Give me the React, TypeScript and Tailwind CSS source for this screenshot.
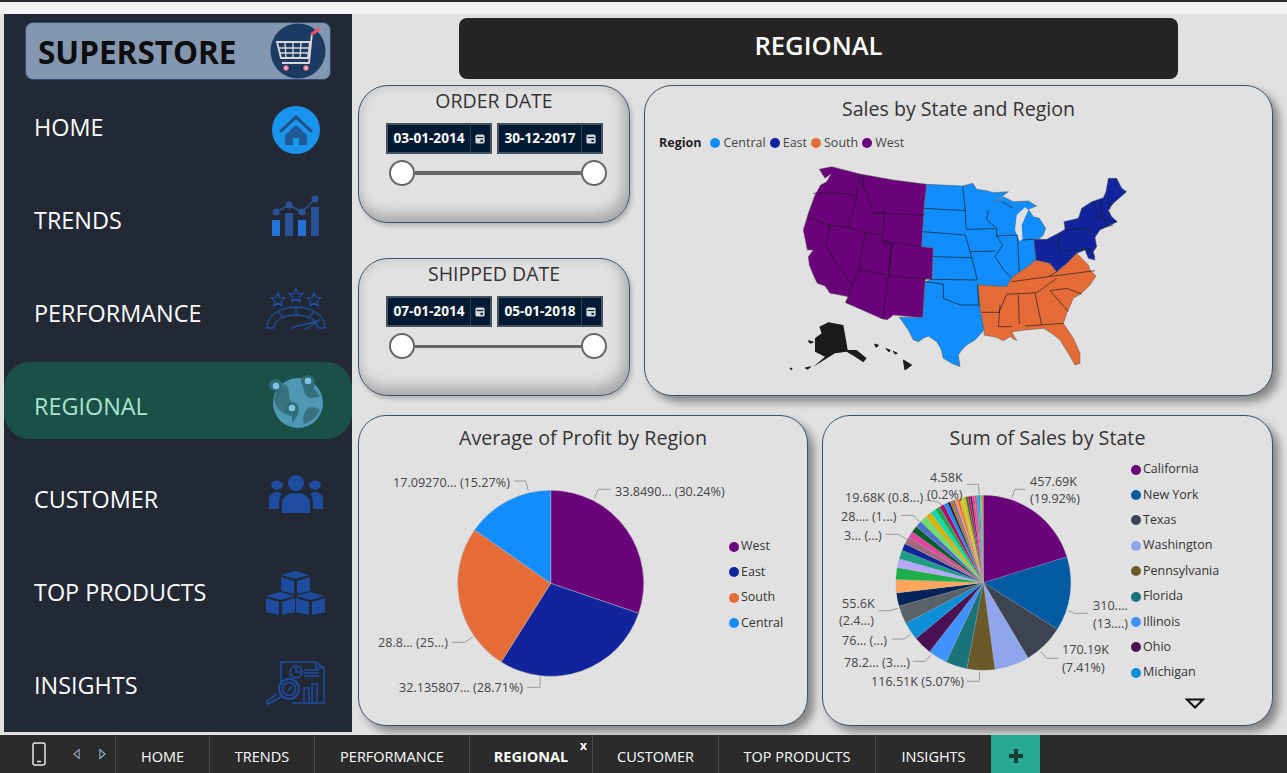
import type { ReactNode } from "react";

const polar = (cx: number, cy: number, r: number, pct: number) => {
  const a = (pct / 100) * Math.PI * 2;
  return [cx + r * Math.sin(a), cy - r * Math.cos(a)];
};

function PieSlices({ cx, cy, r, data, strokeWidth }: { cx: number; cy: number; r: number; data: [number, string][]; strokeWidth: number }) {
  const total = data.reduce((s, d) => s + d[0], 0);
  let run = 0;
  return (
    <>
      {data.map(([v, color], i) => {
        const from = (run / total) * 100;
        run += v;
        const to = (run / total) * 100;
        const [x1, y1] = polar(cx, cy, r, from);
        const [x2, y2] = polar(cx, cy, r, to);
        return (
          <path
            key={i}
            d={`M${cx} ${cy}L${x1} ${y1}A${r} ${r} 0 ${to - from > 50 ? 1 : 0} 1 ${x2} ${y2}Z`}
            fill={color}
            stroke="#b5b5b5"
            strokeWidth={strokeWidth}
          />
        );
      })}
    </>
  );
}

const profitData: [number, string][] = [
  [30.24, "#6b007b"],
  [28.71, "#12239e"],
  [25.78, "#e66c37"],
  [15.27, "#118dff"],
];

const salesData: [number, string][] = [
  [19.92, "#6b007b"], [13.5, "#005ba3"], [7.41, "#3b4450"], [6.3, "#8fa6ee"], [5.07, "#6b5a29"],
  [3.9, "#1a7379"], [3.5, "#4092ff"], [3.4, "#4a1153"], [3.3, "#0a8fd8"], [3.3, "#5a6168"],
  [2.4, "#00245a"], [2.4, "#ffa65c"], [2.2, "#1db04a"], [1.6, "#b8a6ff"], [1.6, "#1e9e85"],
  [1.3, "#10259a"], [1.3, "#a5697f"], [1.2, "#e0459f"], [1.2, "#0b5a2a"], [1.2, "#4a6fc8"],
  [1.2, "#6edc6e"], [1.2, "#dcb20c"], [1.0, "#0cdcb0"], [0.9, "#20a84a"], [0.86, "#b3006e"],
  [0.7, "#118dff"], [0.5, "#2a1a5e"], [0.5, "#a67c00"], [0.4, "#7a5fd0"], [0.4, "#ff9a3c"],
  [0.4, "#e66c37"], [0.4, "#f5a623"], [0.4, "#b5e61d"], [0.4, "#ffa500"], [0.4, "#0f7b3f"],
  [0.4, "#d0103a"], [0.4, "#5a1a8a"], [0.4, "#ff3b6b"], [0.4, "#e0459f"], [0.3, "#1db0c4"],
  [0.3, "#118dff"], [0.2, "#dcb20c"], [0.2, "#0cdcb0"], [0.2, "#e66c37"],
];

const states = [
  "California", "New York", "Texas", "Washington", "Pennsylvania", "Florida", "Illinois", "Ohio", "Michigan",
];
const stateColors: Record<string, string> = {
  California: "bg-[#6b007b]",
  "New York": "bg-[#005ba3]",
  Texas: "bg-[#3b4450]",
  Washington: "bg-[#8fa6ee]",
  Pennsylvania: "bg-[#6b5a29]",
  Florida: "bg-[#1a7379]",
  Illinois: "bg-[#4092ff]",
  Ohio: "bg-[#4a1153]",
  Michigan: "bg-[#0a8fd8]",
};

function Card({ className, children }: { className: string; children: ReactNode }) {
  return (
    <div className={`rounded-[28px] border border-[#3c5168] bg-[#e1e1e1] shadow-[6px_6px_8px_rgba(0,0,0,0.4)] ${className}`}>
      {children}
    </div>
  );
}

function CalendarGlyph() {
  return (
    <svg viewBox="0 0 12 12" className="h-[10px] w-[10px]">
      <rect x="0.5" y="0.5" width="11" height="11" rx="2" fill="#d5d9de" />
      <rect x="2" y="3.5" width="8" height="1.4" fill="#001a33" />
      <rect x="6.5" y="7" width="3" height="2.4" fill="#001a33" />
    </svg>
  );
}

function DateBox({ value }: { value: string }) {
  return (
    <div className="flex h-[31px] w-[106px] items-center border-2 border-[#47525e] bg-[#001a33]">
      <span className="w-[82px] pl-[1px] text-center text-[13.6px] font-bold text-white">{value}</span>
      <span className="flex h-full flex-1 items-center justify-center border-l border-[#2c3e52]">
        <CalendarGlyph />
      </span>
    </div>
  );
}

function DateCard({ title, from, to, track }: { title: string; from: string; to: string; track: string }) {
  return (
    <div className="flex h-[138px] w-[272px] flex-col items-center rounded-[30px] border border-[#3c5168] bg-[#e1e1e1] pt-[3px] shadow-[inset_-5px_-8px_14px_rgba(0,0,0,0.25),inset_3px_3px_8px_rgba(0,0,0,0.06),2px_3px_4px_rgba(0,0,0,0.2)]">
      <div className="text-[19.5px] leading-[24px] text-[#333]">{title}</div>
      <div className="mt-[10px] flex gap-[5px]">
        <DateBox value={from} />
        <DateBox value={to} />
      </div>
      <div className="ml-[8px] mt-[6px] flex w-[218px] items-center">
        <span className="h-[26px] w-[26px] shrink-0 rounded-full border-2 border-[#666] bg-white" />
        <span className={`flex-1 bg-[#666] ${track}`} />
        <span className="h-[26px] w-[26px] shrink-0 rounded-full border-2 border-[#666] bg-white" />
      </div>
    </div>
  );
}

function UsaMap() {
  const line = "#1c1c1c";
  return (
    <svg viewBox="0 0 1050 690" className="h-[230px] w-[350px] blur-[0.4px]">
      <g stroke="#555" strokeWidth="1.5" strokeLinejoin="round">
        <path
          fill="#6b007b"
          d="M118 58L155 50L240 72L340 90L440 103L432 175L425 290L460 293L456 388L436 386L428 503L340 495L322 509L308 507L197 458L205 440L165 432L150 430L135 408L112 400L100 375L88 345L85 320L100 300L82 300L70 240L85 190L105 135L122 105L140 95L155 70L135 85Z"
        />
        <path
          fill="#118dff"
          d="M440 103L548 108L578 100L590 118L620 122L640 128L685 125L640 158L670 140L700 155L745 153L770 168L745 178L760 200L778 205L797 235L790 255L780 265L762 268L768 330L750 345L720 365L695 385L680 410L595 405L600 470L612 540L585 570L560 585L545 600L535 615L540 650L515 640L490 625L482 595L470 575L445 558L430 565L415 575L400 570L385 540L358 502L428 503L436 395L456 388L460 293L425 290L432 175Z"
        />
        <path
          fill="#e66c37"
          d="M595 405L680 410L695 385L720 365L750 345L768 330L810 340L830 365L855 345L890 310L925 345L930 360L948 378L930 405L905 430L880 445L860 490L850 520L880 565L900 610L900 640L885 645L865 610L840 570L815 550L790 535L735 540L695 545L710 572L690 560L670 572L650 562L612 555L612 540L600 470Z"
        />
        <path
          fill="#12239e"
          d="M762 268L800 268L835 250L855 238L852 215L895 205L905 175L935 155L970 143L978 125L985 85L1010 85L1025 115L1040 125L1000 160L985 180L995 200L1012 215L985 228L960 240L945 262L950 290L940 305L945 330L925 325L915 300L890 310L860 340L830 365L810 340L768 330Z"
        />
      </g>
      <path fill="#e1e1e1" d="M735 172L710 195L705 240L718 272L728 270L725 225L745 180Z" />
      <path
        fill="none"
        stroke={line}
        strokeWidth="2"
        strokeLinejoin="round"
        d="M100 130L128 128L190 130L232 140M240 72L228 138M250 78L250 110L265 145L280 190L315 185M232 140L205 232M85 203L150 225L205 232L255 247L305 255M315 185L305 272L425 290M280 190L432 195M255 247L237 360L325 375L335 283L305 278M335 283L327 378L456 388M150 225L137 290L215 405L205 440L197 458M237 360L215 405M325 375L308 507M432 175L556 182M428 245L556 255M548 108L556 182L558 238M460 320L575 323M556 255L575 323L592 390M456 388L592 390M436 395L490 403L490 445L540 465L595 465M592 405L597 470M558 238L645 236M625 180L620 210L650 235L650 258L668 285L645 320L675 365L695 385M665 155L700 175M650 258L712 255L718 365M570 305L645 303M725 270L762 268M835 250L838 305L935 295M695 395L805 380L830 365M805 380L945 362M680 433L770 428L830 385M810 422L860 415L905 432M810 422L865 485M765 430L785 525M715 435L718 522M735 528L850 520M660 465L655 530L695 530M605 487L660 487M680 433L657 487M855 238L925 235L945 262M925 295L945 320M940 155L955 205M965 150L965 205M985 140L990 180M955 208L1010 215M958 235L1000 225"
      />
      <g fill="#1a1a1a">
        <path d="M118 530L145 517L190 525L203 600L230 600L260 625L250 637L225 620L200 605L165 610L100 650L135 620L105 605L105 565L125 550Z" />
        <path d="M370 630L395 645L375 660ZM318 596L330 600L328 606ZM340 604L352 610L345 612ZM284 582L296 586L288 592ZM85 572L100 576L90 580ZM30 655L36 655L34 660ZM76 654L92 650L84 658Z" stroke="#1a1a1a" strokeWidth="3" />
      </g>
    </svg>
  );
}

const lineGrey = "#9a9a9a";

function ProfitPie() {
  const leaders = [
    "M594.3 498.3L598.3 489.3L610.7 489.3",
    "M514 481L525.7 481L528.3 490.7",
    "M452.3 642.3L465 642.3L472.7 636.7",
    "M527.3 687.3L540 687.3L540.3 676.7",
  ];
  return (
    <svg viewBox="360 460 365 250" className="h-[250px] w-[365px] shrink-0">
      <PieSlices cx={550.7} cy={583.3} r={93} data={profitData} strokeWidth={0.5} />
      {leaders.map((d) => (
        <path key={d} d={d} fill="none" stroke={lineGrey} />
      ))}
      <g fontSize="12.6" fill="#444">
        <text x="615" y="496">33.8490... (30.24%)</text>
        <text x="393" y="487">17.09270... (15.27%)</text>
        <text x="378" y="647">28.8... (25...)</text>
        <text x="399" y="692">32.135807... (28.71%)</text>
      </g>
    </svg>
  );
}

function SalesPie() {
  const leaders = [
    "M966.7 484.3L978.3 484.3L979.3 494.3",
    "M1025.7 489.3L1015 489.3L1011.7 497.7",
    "M925 500L936.7 501.7L942.3 505",
    "M901 515.3L913.3 515.3L919.3 521.7",
    "M886 534.3L898.3 534.3L906.7 539.3",
    "M878.3 610.7L890 610.7L898.3 608.3",
    "M891.7 639L904 639L911 634",
    "M912.7 661.3L925 661.3L931 655",
    "M966.7 681.3L979.3 681.3L979.7 671.7",
    "M1040.7 651.7L1046.7 658.3L1058.3 658.3",
    "M1068.3 610.7L1075 613.3L1088 613.3",
  ];
  const labels: [number, number, string][] = [
    [930, 482, "4.58K"], [927, 499, "(0.2%)"], [1030, 486, "457.69K"], [1030, 503, "(19.92%)"],
    [845, 502, "19.68K (0.8...)"], [841, 521, "28.... (1...)"], [844, 540, "3... (...)"],
    [842, 608, "55.6K"], [839, 625, "(2.4...)"], [842, 645, "76... (...)"], [844, 667, "78.2... (3....)"],
    [871, 686, "116.51K (5.07%)"], [1062, 654, "170.19K"], [1062, 672, "(7.41%)"],
    [1093, 610, "310...."], [1093, 628, "(13....)"],
  ];
  return (
    <svg viewBox="824 452 302 265" className="h-[265px] w-[302px] shrink-0 overflow-visible">
      <PieSlices cx={983.3} cy={582.7} r={87.5} data={salesData} strokeWidth={0.2} />
      {leaders.map((d) => (
        <path key={d} d={d} fill="none" stroke={lineGrey} />
      ))}
      <g fontSize="12.6" fill="#444">
        {labels.map(([x, y, t]) => (
          <text key={t} x={x} y={y}>{t}</text>
        ))}
      </g>
    </svg>
  );
}

function CartLogo() {
  return (
    <svg viewBox="0 0 56 56" className="h-[56px] w-[56px]">
      <circle cx="28" cy="28" r="27.5" fill="#1c3b63" />
      <path d="M7 19H40L38 35H11Z" fill="none" stroke="#d9d9d9" strokeWidth="1.8" />
      <path d="M8 25H39M9 30H38M15 19L16 35M23 19L23 35M31 19L30 35" stroke="#d9d9d9" strokeWidth="1.3" />
      <path d="M42 10L39 40H12" fill="none" stroke="#d9d9d9" strokeWidth="1.8" />
      <path d="M42 11L49 6" stroke="#f0566a" strokeWidth="3" strokeLinecap="round" />
      <circle cx="16" cy="45" r="2.4" fill="#e8b8c0" stroke="#f0566a" />
      <circle cx="36" cy="45" r="2.4" fill="#e8b8c0" stroke="#f0566a" />
    </svg>
  );
}

const navBlue = "#1e4d9f";

function HomeIcon() {
  return (
    <svg viewBox="0 0 48 48" className="h-[48px] w-[48px]">
      <circle cx="24" cy="24" r="24" fill="#1a95ee" />
      <path d="M9 25L24 11L39 25" fill="none" stroke="#1e4d84" strokeWidth="3" strokeLinecap="round" strokeLinejoin="round" />
      <path d="M13 29L24 19L35 29V39H27V32H21V39H13Z" fill="#1e5a9a" />
    </svg>
  );
}

function TrendsIcon() {
  return (
    <svg viewBox="0 0 48 42" className="h-[42px] w-[48px]">
      <rect x="0" y="25" width="8" height="16" fill="#2273d8" />
      <rect x="13" y="18" width="8" height="23" fill="#2a5299" />
      <rect x="26" y="25" width="8" height="16" fill="#2273d8" />
      <rect x="39" y="12" width="8" height="29" fill="#2a5299" />
      <path d="M4 17L17 10L30 17L43 4" fill="none" stroke="#2a5299" strokeWidth="1.5" />
      <g fill="#2a5299">
        <circle cx="4" cy="17" r="3.5" /><circle cx="17" cy="10" r="3.5" /><circle cx="30" cy="17" r="3.5" /><circle cx="43" cy="4" r="3.5" />
      </g>
    </svg>
  );
}

function star(cx: number, cy: number) {
  const pts = [];
  for (let i = 0; i < 10; i++) {
    const r = i % 2 ? 3.2 : 7.5;
    const a = (i * Math.PI) / 5;
    pts.push(`${(cx + r * Math.sin(a)).toFixed(1)},${(cy - r * Math.cos(a)).toFixed(1)}`);
  }
  return pts.join(" ");
}

function GaugeIcon() {
  return (
    <svg viewBox="0 0 60 42" className="h-[42px] w-[60px]" fill="none" stroke={navBlue} strokeWidth="1.4" strokeLinejoin="round">
      <polygon points={star(12, 12)} />
      <polygon points={star(30, 8)} />
      <polygon points={star(48, 12)} />
      <path d="M1 40C1 28 13 19 30 19C47 19 59 28 59 40H52C51 32 42 27 30 27C18 27 9 32 8 40Z" />
      <path d="M30 19V27M12 24L18 30M48 24L42 30" />
      <path d="M26 41C27 37 38 38 54 32L38 42C32 44 26 44 26 41Z" />
    </svg>
  );
}

function GlobeIcon() {
  const pin = "M0 0C-7 0-7-9 0-9C7-9 7 0 0 7C0 7 0 7 0 0Z";
  return (
    <svg viewBox="0 0 56 56" className="h-[56px] w-[56px]">
      <circle cx="30" cy="31" r="25" fill="#4f97b3" />
      <path d="M17 12C24 18 18 24 24 30C30 32 27 40 22 44C14 42 8 36 6 28C8 20 12 16 17 12ZM34 10C42 14 48 18 52 24C44 28 38 26 36 20ZM40 36C44 34 50 36 52 38C48 46 42 50 36 52C34 46 36 40 40 36Z" fill="#36727f" />
      <g fill="#2f6d78">
        <g transform="translate(40 15) scale(1.3)"><path d={pin} /></g>
        <g transform="translate(8 19) scale(1.3)"><path d={pin} /></g>
        <g transform="translate(24 42) scale(1.3)"><path d={pin} /></g>
      </g>
      <g fill="#7ec3e0">
        <circle cx="40" cy="9" r="3.3" /><circle cx="8" cy="14" r="3.3" /><circle cx="24" cy="36" r="3.3" />
      </g>
    </svg>
  );
}

function UsersIcon() {
  return (
    <svg viewBox="0 0 54 38" className="h-[38px] w-[54px]" fill={navBlue}>
      <circle cx="27" cy="8" r="8" />
      <ellipse cx="8" cy="10" rx="6" ry="4.5" />
      <ellipse cx="46" cy="10" rx="6" ry="4.5" />
      <path d="M13 38V28C13 21 20 18 27 18C34 18 41 21 41 28V38Z" />
      <path d="M0 34V24C0 19 4 17 8 17C10 17 12 18 13 19C10 22 10 26 10 34ZM54 34V24C54 19 50 17 46 17C44 17 42 18 41 19C44 22 44 26 44 34Z" />
    </svg>
  );
}

function BoxesIcon() {
  const box = "M0 4L14 0L28 4L15 8ZM0 6L13 10V23L0 20ZM29 6L16 10V23L29 20Z";
  return (
    <svg viewBox="0 0 60 44" className="h-[44px] w-[60px]" fill={navBlue}>
      <g transform="translate(15 0)"><path d={box} /></g>
      <g transform="translate(0 21)"><path d={box} /></g>
      <g transform="translate(30 21)"><path d={box} /></g>
    </svg>
  );
}

function ReportIcon() {
  return (
    <svg viewBox="0 0 60 44" className="h-[44px] w-[60px]" fill="none" stroke={navBlue} strokeWidth="1.6">
      <path d="M15 24V1H50L58 7V42H26" />
      <path d="M50 1V7H58" />
      <path d="M24 11A6 6 0 1 0 36 11A6 6 0 1 0 24 11M30 5V11H36" />
      <path d="M38 9H53M38 12H53M38 15H53" />
      <path d="M38 42V27H43V42M46 42V23H51V42" />
      <circle cx="23" cy="28" r="10" strokeWidth="2" />
      <circle cx="23" cy="28" r="6.5" />
      <path d="M22 30L26 25" />
      <path d="M15 36L2 43L0 41L11 33" />
    </svg>
  );
}

const navItems: { label: string; icon: ReactNode; shift: string }[] = [
  { label: "HOME", icon: <HomeIcon />, shift: "mt-[6px]" },
  { label: "TRENDS", icon: <TrendsIcon />, shift: "mb-[8px]" },
  { label: "PERFORMANCE", icon: <GaugeIcon />, shift: "mb-[8px]" },
  { label: "REGIONAL", icon: <GlobeIcon />, shift: "mb-[12px]" },
  { label: "CUSTOMER", icon: <UsersIcon />, shift: "mb-[10px]" },
  { label: "TOP PRODUCTS", icon: <BoxesIcon />, shift: "mt-[2px]" },
  { label: "INSIGHTS", icon: <ReportIcon />, shift: "mb-[4px]" },
];

function Sidebar() {
  return (
    <aside className="flex h-[718px] w-[348px] shrink-0 flex-col bg-[#222935]">
      <div className="mx-[21px] mt-[8px] flex h-[58px] items-center justify-between rounded-lg border border-[#2e4a78] bg-[#8497b0] pl-[12px] pr-[4px]">
        <span className="pt-[2px] text-[31.5px] font-bold leading-none text-[#0d0d0d]">SUPERSTORE</span>
        <CartLogo />
      </div>
      {navItems.map((item) => {
        const active = item.label === "REGIONAL";
        return (
          <div key={item.label} className="relative flex h-[93px] items-center justify-between pl-[30px] pr-[26px]">
            {active && <div className="absolute inset-x-0 top-[3px] h-[77px] rounded-[26px] bg-[#1b5048]" />}
            <span className={`relative pt-[2px] text-[23.4px] ${active ? "text-[#a8e4cf]" : "text-white"}`}>{item.label}</span>
            <span className={`relative flex w-[60px] justify-center ${item.shift}`}>{item.icon}</span>
          </div>
        );
      })}
    </aside>
  );
}

const tabs = [
  { label: "HOME", w: "w-[94px]" },
  { label: "TRENDS", w: "w-[105px]" },
  { label: "PERFORMANCE", w: "w-[155px]" },
  { label: "REGIONAL", w: "w-[123px]" },
  { label: "CUSTOMER", w: "w-[126px]" },
  { label: "TOP PRODUCTS", w: "w-[157px]" },
  { label: "INSIGHTS", w: "w-[116px]" },
];

function TabBar() {
  return (
    <div className="mt-[3px] flex h-[38px] items-stretch bg-[#2b2b2b] text-white">
      <div className="flex w-[115px] items-center pl-[32px]">
        <svg viewBox="0 0 14 24" className="h-[24px] w-[14px]" fill="none" stroke="#e8e8e8" strokeWidth="1.5">
          <rect x="1" y="1" width="12" height="22" rx="2" />
          <path d="M5 19.5H9" />
        </svg>
        <svg viewBox="0 0 8 12" className="ml-[27px] h-[12px] w-[7px]" fill="none" stroke="#9db3c6" strokeWidth="1.2">
          <path d="M7 1L1 6L7 11Z" />
        </svg>
        <svg viewBox="0 0 8 12" className="ml-[19px] h-[12px] w-[7px]" fill="none" stroke="#8fc0e6" strokeWidth="1.2">
          <path d="M1 1L7 6L1 11Z" />
        </svg>
      </div>
      {tabs.map((tab) => (
        <div
          key={tab.label}
          className={`relative flex items-center justify-center border-l border-[#4a4a4a] pt-[6px] text-[14.5px] ${tab.w} ${tab.label === "REGIONAL" ? "font-bold" : ""}`}
        >
          {tab.label}
          {tab.label === "REGIONAL" && (
            <span className="absolute right-[5px] top-[5px] text-[12px] font-bold leading-none">x</span>
          )}
        </div>
      ))}
      <div className="flex w-[49px] items-center justify-center bg-[#28a890] pt-[3px]">
        <svg viewBox="0 0 14 14" className="h-[14px] w-[14px]" fill="#1c3a34">
          <path d="M5 0H9V5H14V9H9V14H5V9H0V5H5Z" />
        </svg>
      </div>
    </div>
  );
}

export default function App() {
  return (
    <div className="flex h-[773px] w-[1287px] flex-col overflow-hidden bg-[#e1e1e1] font-['Open_Sans','Noto_Sans',sans-serif]">
      <div className="h-[2px] bg-[#2b2b2b]" />
      <div className="h-[12px] bg-[#f2f2f2]" />
      <div className="flex flex-1">
        <div className="ml-[4px]">
          <Sidebar />
        </div>
        <main className="flex flex-1 flex-col pl-[6px]">
          {/* Page title */}
          <div className="ml-[101px] mt-[4px] flex h-[61px] w-[719px] items-center justify-center rounded-lg bg-[#252423] pb-[4px] text-[25.6px] font-semibold text-white">
            REGIONAL
          </div>

          <div className="mt-[6px] flex gap-[14px]">
            <div className="flex flex-col gap-[35px]">
              <DateCard title="ORDER DATE" from="03-01-2014" to="30-12-2017" track="h-[4px]" />
              <DateCard title="SHIPPED DATE" from="07-01-2014" to="05-01-2018" track="h-[3px]" />
            </div>
            <Card className="h-[311px] w-[629px]">
              <div className="pt-[9px] text-center text-[19.6px] leading-[28px] text-[#333]">Sales by State and Region</div>
              <div className="ml-[14px] mt-[13px] flex h-[14px] items-center text-[12.5px] text-[#444]">
                <span className="mr-[9px] font-bold text-[#252423]">Region</span>
                <span className="mr-[3px] h-[10px] w-[10px] rounded-full bg-[#118dff]" />
                <span className="mr-[4px]">Central</span>
                <span className="mr-[3px] h-[10px] w-[10px] rounded-full bg-[#12239e]" />
                <span className="mr-[4px]">East</span>
                <span className="mr-[3px] h-[10px] w-[10px] rounded-full bg-[#e66c37]" />
                <span className="mr-[4px]">South</span>
                <span className="mr-[3px] h-[10px] w-[10px] rounded-full bg-[#6b007b]" />
                <span>West</span>
              </div>
              <div className="ml-[135px]">
                <UsaMap />
              </div>
            </Card>
          </div>

          <div className="mt-[19px] flex gap-[14px]">
            <Card className="h-[311px] w-[450px]">
              <div className="h-[44px] pt-[8px] text-center text-[19.7px] leading-[28px] text-[#333]">Average of Profit by Region</div>
              <div className="ml-[1px] flex">
                <ProfitPie />
                <div className="ml-[4px] mt-[74px] flex flex-col text-[12.5px] font-medium text-[#333]">
                  {["West", "East", "South", "Central"].map((name, i) => (
                    <div key={name} className="flex h-[25.5px] items-center gap-[2px]">
                      <span className={`h-[10px] w-[10px] rounded-full ${["bg-[#6b007b]", "bg-[#12239e]", "bg-[#e66c37]", "bg-[#118dff]"][i]}`} />
                      {name}
                    </div>
                  ))}
                </div>
              </div>
            </Card>
            <Card className="h-[311px] w-[451px]">
              <div className="h-[36px] pt-[8px] text-center text-[19.7px] leading-[28px] text-[#333]">Sum of Sales by State</div>
              <div className="ml-[1px] flex">
                <SalesPie />
                <div className="ml-[5px] mt-[5px] flex flex-col text-[12.5px] font-medium text-[#333]">
                  {states.map((name) => (
                    <div key={name} className="flex h-[25.4px] items-center gap-[2px]">
                      <span className={`h-[10px] w-[10px] rounded-full ${stateColors[name]}`} />
                      {name}
                    </div>
                  ))}
                  <svg viewBox="0 0 20 11" className="ml-[54px] mt-[12px] h-[11px] w-[20px]" fill="none" stroke="#111" strokeWidth="2">
                    <path d="M2 1.5H18L10 9.5Z" />
                  </svg>
                </div>
              </div>
            </Card>
          </div>
        </main>
      </div>
      <TabBar />
    </div>
  );
}
